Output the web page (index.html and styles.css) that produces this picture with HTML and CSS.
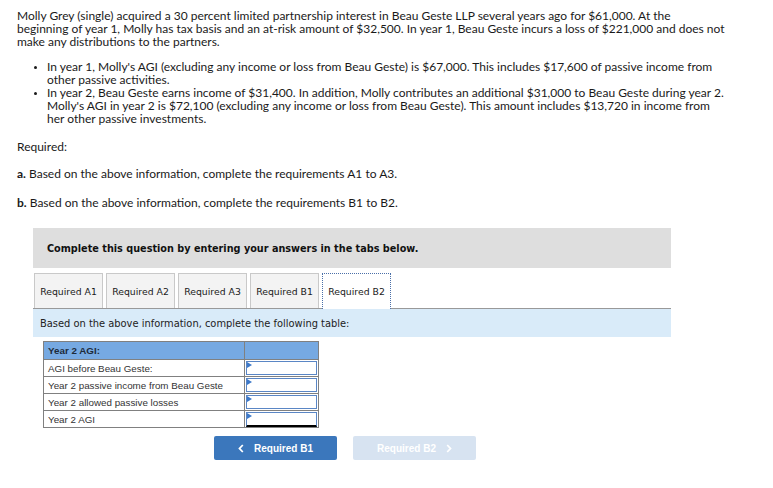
FILE: index.html
```html
<!DOCTYPE html>
<html>
<head>
<meta charset="utf-8">
<link rel="stylesheet" href="styles.css">
</head>
<body>
<div class="page">
  <p class="intro">Molly Grey (single) acquired a 30 percent limited partnership interest in Beau Geste LLP several years ago for $61,000. At the beginning&nbsp;of year 1, Molly has tax basis and an at-risk amount of $32,500. In year 1, Beau Geste incurs a loss of $221,000 and does not make any distributions to the partners.</p>
  <ul class="facts">
    <li>In year 1, Molly's AGI (excluding any income or loss from Beau Geste) is $67,000. This includes $17,600 of passive income from other&nbsp;passive activities.</li>
    <li>In year 2, Beau Geste earns income of $31,400. In addition, Molly contributes an additional $31,000 to Beau Geste during year 2. Molly's AGI in year 2 is $72,100 (excluding any income or loss from Beau Geste). This amount includes $13,720 in income from her&nbsp;other passive investments.</li>
  </ul>
  <p class="req">Required:</p>
  <p class="req-item"><b>a.</b> Based on the above information, complete the requirements A1 to A3.</p>
  <p class="req-item"><b>b.</b> Based on the above information, complete the requirements B1 to B2.</p>

  <div class="question">
    <div class="banner">Complete this question by entering your answers in the tabs below.</div>
    <div class="tabs">
      <div class="tab">Required A1</div>
      <div class="tab">Required A2</div>
      <div class="tab">Required A3</div>
      <div class="tab">Required B1</div>
      <div class="tab active">Required B2</div>
    </div>
    <div class="instr">Based on the above information, complete the following table:</div>
    <table class="grid">
      <tr class="head"><td class="label">Year 2 AGI:</td><td class="val"></td></tr>
      <tr><td class="label">AGI before Beau Geste:</td><td class="val"><div class="inp"></div></td></tr>
      <tr><td class="label">Year 2 passive income from Beau Geste</td><td class="val"><div class="inp"></div></td></tr>
      <tr><td class="label">Year 2 allowed passive losses</td><td class="val"><div class="inp"></div></td></tr>
      <tr><td class="label">Year 2 AGI</td><td class="val"><div class="inp total"></div></td></tr>
    </table>
    <div class="nav">
      <div class="btn prev"><svg class="chev" width="6" height="9" viewBox="0 0 6 9"><polyline points="4.8,1 1.5,4.5 4.8,8" fill="none" stroke="#fff" stroke-width="1.8"/></svg><span>Required B1</span></div>
      <div class="btn next"><span>Required B2</span><svg class="chev" width="6" height="9" viewBox="0 0 6 9"><polyline points="1.2,1 4.5,4.5 1.2,8" fill="none" stroke="#fff" stroke-width="1.8"/></svg></div>
    </div>
  </div>
</div>
</body>
</html>
```
FILE: styles.css
```css
html, body {
  margin: 0;
  padding: 0;
  background: #fff;
}
.page {
  width: 712px;
  padding: 9px 0 0 17px;
  font-family: "Lato", "Liberation Sans", sans-serif;
  font-size: 12px;
  line-height: 13px;
  color: #1a1a1a;
}
p { margin: 0; }
.intro { margin-bottom: 12px; }
.facts {
  margin: 0;
  padding: 0 0 0 30px;
}
.facts li::marker {
  font-size: 9px;
}
.req { margin-top: 15px; }
.req-item { margin-top: 14px; }
.req-item + .req-item { margin-top: 16px; }

.question {
  margin: 19px 0 0 16px;
  width: 638px;
}
.banner {
  background: #dedede;
  height: 40px;
  display: flex;
  align-items: center;
  padding-left: 14px;
  font-family: "DejaVu Sans", sans-serif;
  font-weight: bold;
  font-size: 9.7px;
  color: #111;
}
.tabs {
  display: flex;
  gap: 3px;
  margin-top: 5px;
  padding-left: 1px;
  border-bottom: 1px solid #999;
}
.tab {
  width: 67px;
  height: 34px;
  display: flex;
  align-items: center;
  justify-content: center;
  background: #f3f3f3;
  border: 1px solid #c9c9c9;
  border-bottom: none;
  font-family: "DejaVu Sans", sans-serif;
  font-size: 9.3px;
  color: #1a1a1a;
}
.tab.active {
  background: #fff;
  border: 1px dotted #4a6fa8;
  border-bottom: none;
  margin-bottom: -1px;
  height: 35px;
}
.instr {
  background: #d9ebf9;
  height: 28px;
  display: flex;
  align-items: center;
  padding-left: 7px;
  font-family: "DejaVu Sans", sans-serif;
  font-size: 9.9px;
  color: #222;
}
.grid {
  margin: 4px 0 0 10px;
  border-collapse: collapse;
  font-family: "Liberation Sans", Arial, sans-serif;
  font-size: 9.8px;
  color: #333;
}
.grid td {
  border: 1px solid #808080;
  height: 16px;
  padding: 0;
}
.grid .label {
  width: 196px;
  padding-left: 4px;
}
.grid .val {
  width: 73px;
  padding: 0;
  vertical-align: top;
}
.grid .head td {
  background: #76a9e2;
  height: 17px;
}
.grid .head .label {
  font-weight: bold;
  color: #1d2b3a;
}
.inp {
  position: relative;
  margin: 1px;
  height: 12px;
  border: 1px solid #5a86c5;
  background: #fff;
}
.inp::before {
  content: "";
  position: absolute;
  left: 0;
  top: 0;
  border-top: 3px solid transparent;
  border-bottom: 3px solid transparent;
  border-left: 5px solid #3d79c9;
}
.inp.total {
  border-bottom: 2px solid #000;
  height: 12px;
  margin-bottom: 0;
}
.nav {
  display: flex;
  gap: 16px;
  margin: 8px 0 0 181px;
}
.btn {
  width: 123px;
  height: 24px;
  border-radius: 2px;
  display: flex;
  align-items: center;
  justify-content: center;
  gap: 10px;
  font-family: "Liberation Sans", Arial, sans-serif;
  font-weight: bold;
  font-size: 10px;
  color: #fff;
}
.btn.prev { background: #3b77bc; }
.btn.next { background: #d7e3f1; }
```
